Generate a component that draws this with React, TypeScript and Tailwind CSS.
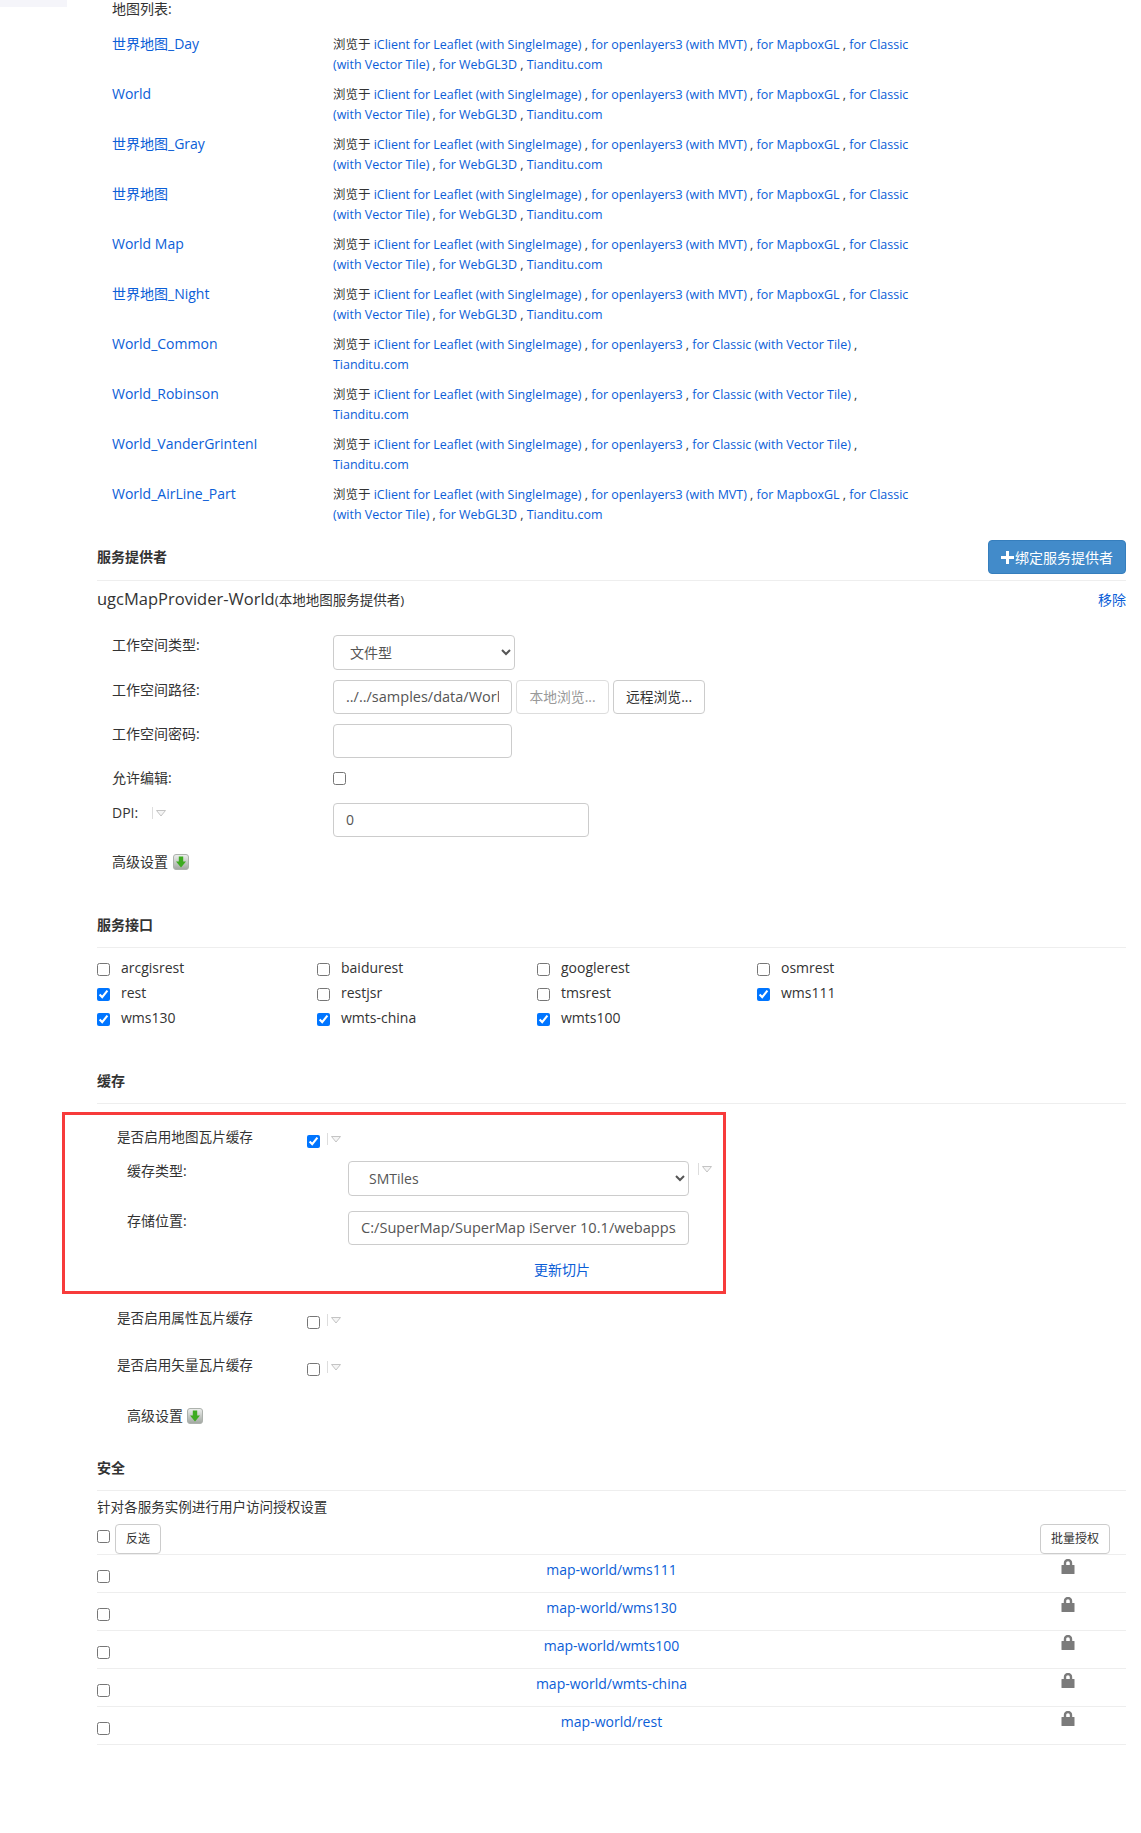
const font = "font-['Open_Sans','Noto_Sans_CJK_SC',sans-serif]";

function Tri() {
  return (
    <span className="flex items-center gap-[3px]">
      <span className="w-px h-[12px] bg-[#ddd]" />
      <svg width="10" height="7" viewBox="0 0 10 7"><path d="M0.5 0.5H9.5L5 6Z" fill="#f5f5f5" stroke="#c4c4c4" /></svg>
    </span>
  );
}

function Green() {
  return (
    <svg width="16" height="16" viewBox="0 0 16 16">
      <defs>
        <linearGradient id="gb" x1="0" y1="0" x2="0" y2="1"><stop offset="0" stopColor="#eef0ee" /><stop offset="1" stopColor="#a0a6a0" /></linearGradient>
      </defs>
      <rect x="0.5" y="0.5" width="15" height="15" rx="2.5" fill="url(#gb)" stroke="#adb2ad" />
      <path d="M5.8 2.5H10.2V7.5H13L8 13.5L3 7.5H5.8Z" fill="#3dab20" />
    </svg>
  );
}

function Lock() {
  return (
    <svg width="14" height="15" viewBox="0 0 14 15">
      <path d="M4 6.5V4a3 3 0 0 1 6 0v2.5" fill="none" stroke="#7b7b7b" strokeWidth="2.4" />
      <rect x="0.5" y="6" width="13" height="9" rx="0.5" fill="#7b7b7b" />
    </svg>
  );
}

const links = "text-[#0b5ed7]";
function Browse({ full }: { full: boolean }) {
  const s = full
    ? ["iClient for Leaflet (with SingleImage)", "for openlayers3 (with MVT)", "for MapboxGL", "for Classic (with Vector Tile)", "for WebGL3D", "Tianditu.com"]
    : ["iClient for Leaflet (with SingleImage)", "for openlayers3", "for Classic (with Vector Tile)", "Tianditu.com"];
  return (
    <div className="w-[590px] pt-[2px] text-[12.47px] leading-[20px]">
      浏览于 {s.map((t, i) => (
        <span key={t}>
          <span className={links}>{t}</span>{i < s.length - 1 ? " , " : ""}
        </span>
      ))}
    </div>
  );
}

const maps: [string, boolean][] = [
  ["世界地图_Day", true], ["World", true], ["世界地图_Gray", true], ["世界地图", true], ["World Map", true],
  ["世界地图_Night", true], ["World_Common", false], ["World_Robinson", false], ["World_VanderGrintenI", false], ["World_AirLine_Part", true],
];

function SectionTitle({ title, className }: { title: string; className?: string }) {
  return (
    <div className={"flex items-center border-b border-[#eee] " + (className ?? "")}>
      <div className="text-[14px] font-bold text-[#333]">{title}</div>
    </div>
  );
}

function Field({ label, className, children }: { label: React.ReactNode; className?: string; children: React.ReactNode }) {
  return (
    <div className={"flex pl-[15px] " + (className ?? "")}>
      <div className="w-[221px] shrink-0 leading-[20px] text-[14px]">{label}</div>
      {children}
    </div>
  );
}

const inputCls = "h-[34px] border border-[#ccc] rounded-[4px] px-[12px] pb-[2px] bg-white text-[#555] outline-none";
const selectCls = "border border-[#ccc] rounded-[4px] bg-white text-[#555] outline-none text-[14px] h-[35px]";
const ifaces: [string, boolean][] = [
  ["arcgisrest", false], ["baidurest", false], ["googlerest", false], ["osmrest", false],
  ["rest", true], ["restjsr", false], ["tmsrest", false], ["wms111", true],
  ["wms130", true], ["wmts-china", true], ["wmts100", true],
];

function CacheRow({ label, checked, className }: { label: string; checked: boolean; className?: string }) {
  return (
    <div className={"flex items-start " + (className ?? "")}>
      <div className="w-[190px] shrink-0 text-[13.6px] leading-[20px]">{label}</div>
      <input type="checkbox" defaultChecked={checked} className="mt-[8px] w-[13px] h-[13px]" />
      <div className="ml-[7px] mt-[6px]"><Tri /></div>
    </div>
  );
}

export default function App() {
  return (
    <div className={font + " w-[1141px] h-[1833px] bg-white text-[#333] text-[14px] overflow-hidden"}>
      <div className="flex h-[33px]">
        <div className="w-[67px] h-[7px] bg-[#f5f5fa]" />
        <div className="ml-[45px] text-[14px] leading-[18px]">地图列表:</div>
      </div>
      <div className="pl-[112px]">
        {maps.map(([n, full]) => (
          <div key={n} className="flex h-[50px]">
            <div className={"w-[221px] text-[14px] leading-[22px] " + links}>{n}</div>
            <Browse full={full} />
          </div>
        ))}
      </div>
      <div className="ml-[97px] w-[1029px]">
        <div className="flex items-center justify-between border-b border-[#eee] pb-[6px] mt-[7px]">
          <div className="text-[14px] font-bold mb-[2px]">服务提供者</div>
          <button className="w-[138px] h-[34px] rounded-[4px] bg-[#428bca] border border-[#357ebd] text-white text-[14px] flex items-center justify-center">
            <svg width="13" height="13" viewBox="0 0 13 13" className="mr-px"><path d="M5 0h3v5h5v3H8v5H5V8H0V5h5z" fill="#fff" /></svg>
            绑定服务提供者
          </button>
        </div>
        <div className="flex justify-between items-center h-[36px]">
          <div className="flex items-baseline text-[16.5px]">ugcMapProvider-World<span className="text-[13.5px]">(本地地图服务提供者)</span></div>
          <span className={"text-[14px] " + links}>移除</span>
        </div>
        <Field label="工作空间类型:" className="mt-[18px] h-[35px]">
          <select className={selectCls + " w-[182px] px-[12px]"} defaultValue="文件型"><option>文件型</option></select>
        </Field>
        <Field label="工作空间路径:" className="mt-[10px] h-[34px]">
          <input readOnly value="../../samples/data/World/World.smwu" className={inputCls + " w-[179px] text-[14.5px]"} />
          <button className="h-[34px] w-[93px] ml-[4px] rounded-[4px] border border-[#ddd] bg-white text-[#999] text-[13.8px]">本地浏览...</button>
          <button className="h-[34px] w-[92px] ml-[4px] rounded-[4px] border border-[#ccc] bg-white text-[13.8px]">远程浏览...</button>
        </Field>
        <Field label="工作空间密码:" className="mt-[10px] h-[34px]">
          <input className={inputCls + " w-[179px] text-[14px]"} />
        </Field>
        <Field label="允许编辑:" className="mt-[10px] h-[34px]">
          <input type="checkbox" className="w-[13px] h-[13px] mt-[4px]" />
        </Field>
        <Field label={<div className="flex items-center">DPI:<div className="ml-[14px]"><Tri /></div></div>} className="mt-[1px] h-[34px]">
          <input readOnly value="0" className={inputCls + " w-[256px] text-[14px]"} />
        </Field>
        <div className="pl-[15px] mt-[15px] flex items-center gap-[5px] text-[14px] leading-[20px]">高级设置 <Green /></div>

        <SectionTitle title="服务接口" className="h-[45px] mt-[31px] pb-[2px]" />
        <div className="grid grid-cols-[220px_220px_220px_220px] mt-[8px]">
          {ifaces.map(([n, c]) => (
            <label key={n} className="flex items-center h-[25px] text-[14px]">
              <input type="checkbox" defaultChecked={c} className="w-[13px] h-[13px] mr-[11px] mt-[2px]" />
              <span className="pb-[2px]">{n}</span>
            </label>
          ))}
        </div>
        <SectionTitle title="缓存" className="h-[43px] mt-[30px] pb-[3px]" />
      </div>

      <div className="ml-[62px] w-[664px] h-[182px] mt-[8px] border-[3px] border-[#f73b3b] pl-[52px] pt-[12px]">
        <CacheRow label="是否启用地图瓦片缓存" checked />
        <div className="flex mt-[13px] pl-[10px] h-[35px]">
          <div className="w-[221px] text-[14px] leading-[20px]">缓存类型:</div>
          <select className={selectCls + " w-[341px] pl-[16px] pr-[12px]"} defaultValue="SMTiles"><option>SMTiles</option></select>
          <div className="ml-[9px] mt-[2px]"><Tri /></div>
        </div>
        <div className="flex mt-[15px] pl-[10px] h-[34px]">
          <div className="w-[221px] text-[14px] leading-[20px]">存储位置:</div>
          <input readOnly value="C:/SuperMap/SuperMap iServer 10.1/webapps/iserver/output" className={inputCls + " w-[341px] text-[14.6px]"} />
        </div>
        <div className={"ml-[417px] mt-[15px] text-[14px] leading-[20px] " + links}>更新切片</div>
      </div>

      <div className="pl-[117px] mt-[14px]">
        <CacheRow label="是否启用属性瓦片缓存" checked={false} />
        <CacheRow label="是否启用矢量瓦片缓存" checked={false} className="mt-[26px]" />
        <div className="pl-[10px] mt-[30px] flex items-center gap-[4px] text-[14px] leading-[20px]">高级设置 <Green /></div>
      </div>

      <div className="ml-[97px] w-[1029px]">
        <SectionTitle title="安全" className="h-[45px] mt-[20px] pb-[2px]" />
        <div className="mt-[7px] text-[13.55px] leading-[18px]">针对各服务实例进行用户访问授权设置</div>
        <div className="flex items-start mt-[8px] h-[31px] border-b border-[#eee]">
          <input type="checkbox" className="w-[13px] h-[13px] mt-[6px]" />
          <button className="h-[30px] w-[46px] ml-[5px] rounded-[4px] border border-[#ccc] bg-white text-[12px]">反选</button>
          <button className="h-[30px] w-[70px] ml-auto mr-[16px] rounded-[4px] border border-[#ccc] bg-white text-[12px]">批量授权</button>
        </div>
        {["map-world/wms111", "map-world/wms130", "map-world/wmts100", "map-world/wmts-china", "map-world/rest"].map((n) => (
          <div key={n} className="grid grid-cols-[1fr_auto_1fr] items-start h-[38px] border-b border-[#eee]">
            <div><input type="checkbox" className="w-[13px] h-[13px] mt-[15px]" /></div>
            <div className={"mt-[4px] text-[14px] leading-[22px] " + links}>{n}</div>
            <div className="flex justify-end mt-[4px] pr-[51px]"><Lock /></div>
          </div>
        ))}
      </div>
    </div>
  );
}
